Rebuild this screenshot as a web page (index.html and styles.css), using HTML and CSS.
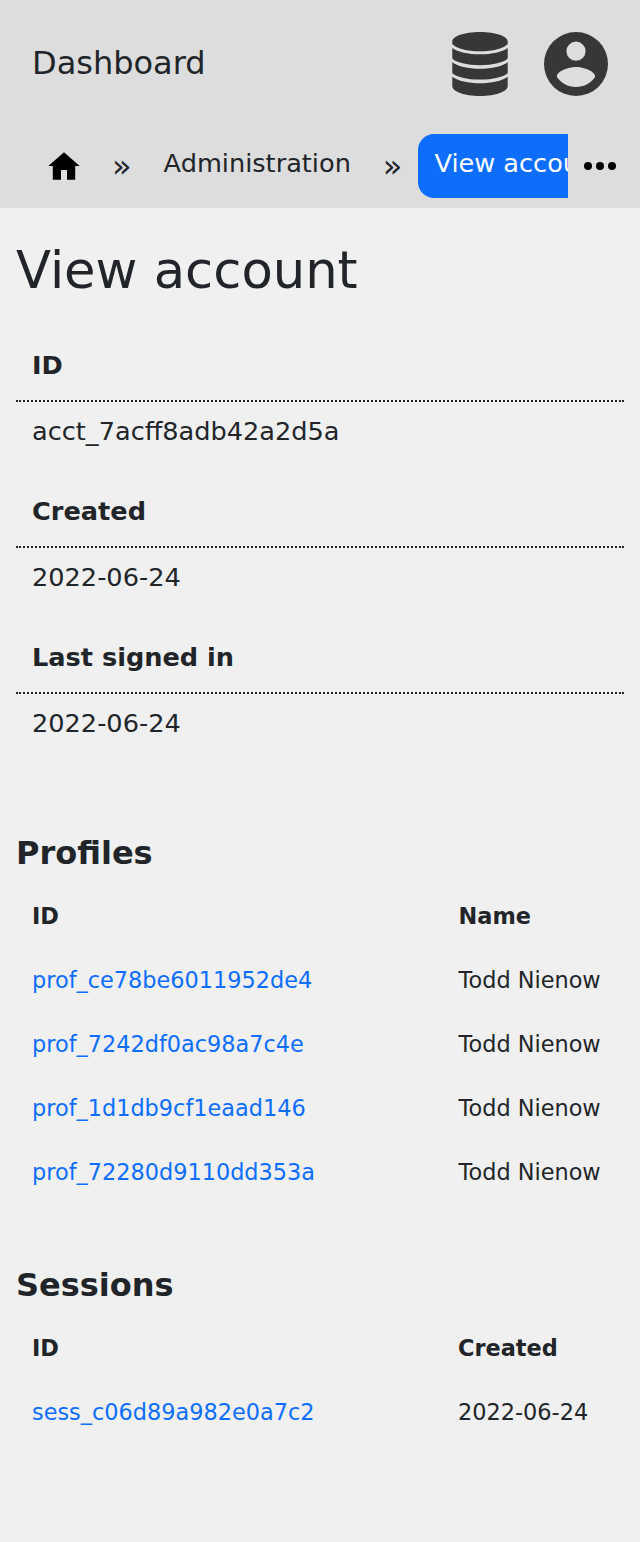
FILE: index.html
```html
<!DOCTYPE html>
<html lang="en">
<head>
<meta charset="utf-8">
<title>View account</title>
<link rel="stylesheet" href="styles.css">
</head>
<body>
<header class="header">
  <div class="topbar">
    <span class="brand">Dashboard</span>
    <nav class="actions">
      <svg class="icon-db" viewBox="0 0 56 64"><path d="M.3 9.500C.3 4.300 12 0 28 0S55.700 4.300 55.700 9.500V12C52 16.500 41 19.300 28 19.300S4 16.500 .3 12zM.3 16C6 20 16 22.300 28 22.300S50 20 55.700 16V26.600C52 30.500 41 33.300 28 33.300S4 30.500 .3 26.600zM.3 30.300C6 34.500 16 36.800 28 36.800S50 34.500 55.700 30.300V41C52 45 41 47.600 28 47.600S4 45 .3 41zM.3 44.700C6 49 16 51.200 28 51.200S50 49 55.700 44.700V54C55.700 59.500 44 64 28 64S.3 59.500 .3 54z"/></svg>
      <svg class="icon-user" viewBox="0 0 64 64"><path fill-rule="evenodd" d="M32 0a32 32 0 1 0 0 64a32 32 0 1 0 0-64zM32 9.600a9.600 9.600 0 1 1 0 19.200a9.600 9.600 0 1 1 0-19.200zM32 55.040c-8 0-15.070-4.100-19.200-10.300.1-6.370 12.800-9.860 19.200-9.860s19.100 3.490 19.200 9.860c-4.130 6.200-11.200 10.300-19.200 10.300z"/></svg>
    </nav>
  </div>
  <nav class="crumbs">
    <div class="trail">
      <a class="home"><svg viewBox="0 0 32 28"><path d="M16 .3L31.700 14H27.200V27.700H19V18H13V27.700H4.800V14H.3z"/></svg></a>
      <span class="sep">»</span>
      <a class="crumb">Administration</a>
      <span class="sep">»</span>
      <a class="crumb active">View account</a>
    </div>
    <svg class="more" viewBox="0 0 32 8"><circle cx="4" cy="4" r="4"/><circle cx="16" cy="4" r="4"/><circle cx="28" cy="4" r="4"/></svg>
  </nav>
</header>
<main class="content">
  <h1 class="title">View account</h1>
  <dl class="details">
    <dt>ID</dt><dd>acct_7acff8adb42a2d5a</dd>
    <dt>Created</dt><dd>2022-06-24</dd>
    <dt>Last signed in</dt><dd>2022-06-24</dd>
  </dl>
  <section class="section profiles">
    <h2>Profiles</h2>
    <div class="row head"><span>ID</span><span>Name</span></div>
    <div class="row"><a>prof_ce78be6011952de4</a><span>Todd Nienow</span></div>
    <div class="row"><a>prof_7242df0ac98a7c4e</a><span>Todd Nienow</span></div>
    <div class="row"><a>prof_1d1db9cf1eaad146</a><span>Todd Nienow</span></div>
    <div class="row"><a>prof_72280d9110dd353a</a><span>Todd Nienow</span></div>
  </section>
  <section class="section">
    <h2>Sessions</h2>
    <div class="row head"><span>ID</span><span>Created</span></div>
    <div class="row"><a>sess_c06d89a982e0a7c2</a><span>2022-06-24</span></div>
  </section>
</main>
</body>
</html>
```
FILE: styles.css
```css
* { box-sizing: border-box; }
body { margin: 0; min-height: 1542px; background: #f0f0f0; color: #212529; font-family: "DejaVu Sans", sans-serif; font-size: 25.6px; }
.header { height: 208px; background: #ddd; }
.topbar { height: 128px; padding: 0 32px; display: flex; align-items: center; justify-content: space-between; }
.brand { font-size: 32px; line-height: 48px; padding-bottom: 2px; }
.actions { display: flex; gap: 36px; fill: #373737; }
.icon-db { width: 56px; height: 64px; }
.icon-user { width: 64px; height: 64px; }
.crumbs { height: 80px; padding: 6px 24px 10px 32px; display: flex; align-items: center; }
.trail { width: 536px; display: flex; overflow: hidden; white-space: nowrap; line-height: 58px; }
.home { flex: none; width: 64px; height: 64px; padding: 18px 16px; }
.home svg { display: block; width: 32px; height: 28px; }
.sep { flex: none; padding: 3px 16px 0; height: 64px; font-size: 32px; }
.crumb { flex: none; height: 64px; padding: 0 16px; }
.active { background: #0d6efd; color: #fff; border-radius: 16px; }
.more { width: 32px; height: 8px; margin-left: 16px; }
.content { padding: 30px 16px 0; }
.title { margin: 0 0 27px; font-size: 51.2px; line-height: 64px; font-weight: 400; }
.details { margin: 0 0 33px; }
.details dt { height: 73px; padding: 17px 16px 0; line-height: 38px; font-weight: 700; border-bottom: 2px dotted #212529; margin-top: -20px; }
.details dt:first-child { margin-top: 0; }
.details dd { margin: 0; height: 93px; padding: 10px 16px 0; line-height: 38px; }
.section { margin-bottom: 48px; }
.section h2 { margin: 0; height: 64px; padding-top: 1px; font-size: 32px; line-height: 64px; }
.row { display: grid; grid-template-columns: 426px 1fr; height: 64px; padding: 0 16px; font-size: 22.4px; line-height: 64px; }
.profiles .row { grid-template-columns: 426.6px 1fr; }
.row a { color: #0d6efd; }
.head { font-weight: 700; }
```
